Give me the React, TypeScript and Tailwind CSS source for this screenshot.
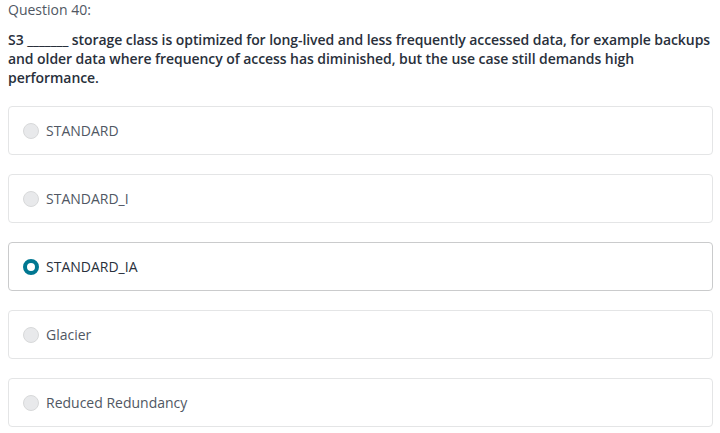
import { useState } from 'react';

const options = ['STANDARD', 'STANDARD_I', 'STANDARD_IA', 'Glacier', 'Reduced Redundancy'];

export default function App() {
  const [selected, setSelected] = useState(2);

  return (
    <div
      className="w-[720px] h-[433px] bg-white pl-2 pr-[7px] overflow-hidden"
      style={{ fontFamily: '"Open Sans", "Liberation Sans", sans-serif' }}
    >
      <div className="text-[14px] leading-[20px] text-[#505763]">Question 40:</div>
      <p className="mt-[10px] text-[14px] leading-[19px] font-semibold text-[#29303b] tracking-[-0.07px]">
        S3 _______ storage class is optimized for long-lived and less frequently accessed data, for example backups and
        older data where frequency of access has diminished, but the use case still demands high performance.
      </p>
      <div className="mt-[19px] flex flex-col gap-[19px]">
        {options.map((opt, i) => {
          const active = i === selected;
          return (
            <button
              key={opt}
              onClick={() => setSelected(i)}
              className={`flex items-center h-[49px] w-full rounded-[4px] border bg-white px-[14px] text-left ${
                active ? 'border-[#cacbcc]' : 'border-[#e4e5e6]'
              }`}
            >
              <span
                className={`box-border w-[16px] h-[16px] rounded-full shrink-0 ${
                  active ? 'border-[4px] border-[#007791] bg-white' : 'border border-[#d8d9da] bg-[#e8e9eb]'
                }`}
              />
              <span
                className={`ml-[7px] text-[14px] ${active ? 'text-[#29303b]' : 'text-[#505763]'}`}
              >
                {opt}
              </span>
            </button>
          );
        })}
      </div>
    </div>
  );
}
